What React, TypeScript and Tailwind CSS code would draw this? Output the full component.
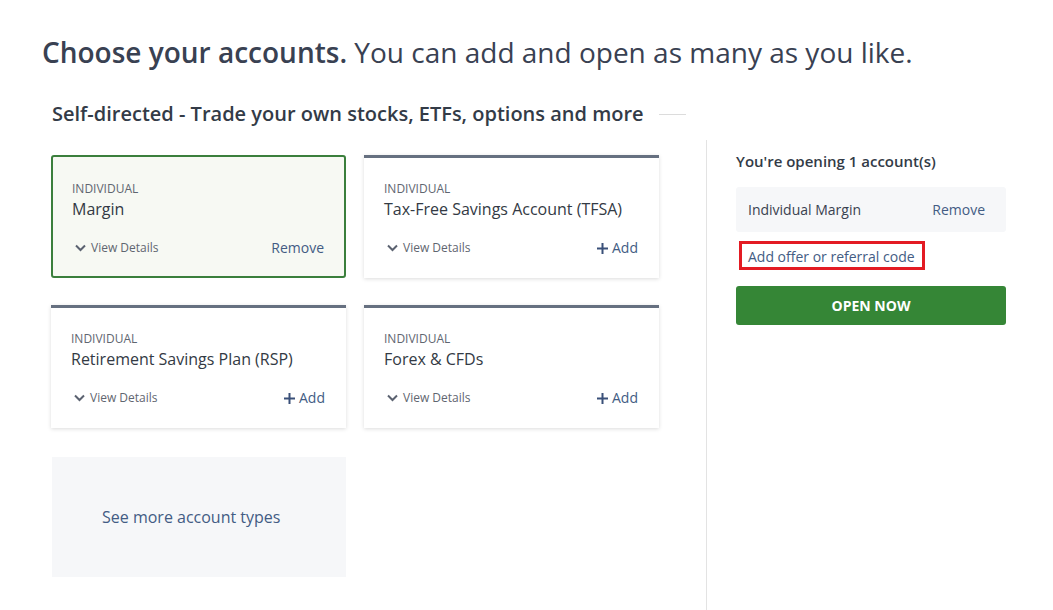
import React from "react";

function Chevron() {
  return (
    <svg width="11" height="8" viewBox="0 0 11 8" className="mr-[5px]">
      <path d="M1 1.5 L5.5 6 L10 1.5" fill="none" stroke="#5b6270" strokeWidth="2" />
    </svg>
  );
}

function Plus() {
  return (
    <svg width="11" height="11" viewBox="0 0 11 11" className="mr-[4px]">
      <path d="M5.5 0 V11 M0 5.5 H11" fill="none" stroke="#3a5079" strokeWidth="2" />
    </svg>
  );
}

function Card({ title, selected }: { title: string; selected?: boolean }) {
  return (
    <div
      className={
        selected
          ? "h-[123px] rounded-[3px] border-2 border-[#3b7f3c] bg-[#f7f9f3] pl-[19px] pr-[20px] pt-[24px]"
          : "h-[123px] border-t-[3px] border-[#667080] bg-white shadow-[0_1px_4px_rgba(0,0,0,0.14)] pl-[20px] pr-[21px] pt-[23px]"
      }
    >
      <div className="text-[12px] leading-[16px] text-[#5f6670] uppercase">Individual</div>
      <div className="mt-px text-[16px] leading-[22px] text-[#333a44]">{title}</div>
      <div className="mt-[18px] flex items-center justify-between">
        <div className="flex items-center text-[12px] leading-[20px] text-[#5f6670] pl-[3px]">
          <Chevron />
          View Details
        </div>
        {selected ? (
          <div className="text-[14px] leading-[20px] text-[#435c84]">Remove</div>
        ) : (
          <div className="flex items-center text-[14px] leading-[20px] text-[#435c84]">
            <Plus />
            Add
          </div>
        )}
      </div>
    </div>
  );
}

export default function App() {
  return (
    <div className="min-h-[610px] bg-white pl-[42px] pt-[33px] font-['Open_Sans',sans-serif]">
      <h1 className="text-[28px] leading-[38px] text-[#394152]">
        <span className="font-[650]">Choose your accounts.</span> You can add and open as many as you like.
      </h1>
      <div className="mt-[30px] flex items-center pl-[10px]">
        <h2 className="text-[20px] leading-[26px] font-semibold text-[#333b47]">
          Self-directed - Trade your own stocks, ETFs, options and more
        </h2>
        <div className="ml-[15px] h-px w-[27px] bg-[#dcdcdc]" />
      </div>
      <div className="mt-[13px] flex">
        <div className="pl-[9px] pt-[15px] pb-[33px] w-[664px]">
          <div className="grid grid-cols-[295px_295px] gap-x-[18px] gap-y-[27px]">
            <Card title="Margin" selected />
            <Card title="Tax-Free Savings Account (TFSA)" />
            <Card title="Retirement Savings Plan (RSP)" />
            <Card title="Forex & CFDs" />
            <div className="ml-px mt-[2px] flex h-[120px] items-center bg-[#f6f7f9] pl-[50px] text-[16px] text-[#435c84]">
              See more account types
            </div>
          </div>
        </div>
        <div className="border-l border-[#e3e3e3] pl-[29px] pt-[11px]">
          <div className="w-[270px]">
            <div className="text-[15px] leading-[20px] font-semibold text-[#333b47]">You're opening 1 account(s)</div>
            <div className="mt-[16px] flex h-[45px] items-center justify-between rounded-[3px] bg-[#f6f7f9] pl-[12px] pr-[21px] text-[14px]">
              <span className="text-[#3a4250]">Individual Margin</span>
              <span className="text-[#435c84]">Remove</span>
            </div>
            <div className="mt-[9px] ml-[3px] inline-block border-[3px] border-[#e31b23] pl-[6px] pr-[7px] pt-[3px] text-[14px] leading-[20px] text-[#435c84]">
              Add offer or referral code
            </div>
            <button className="mt-[16px] flex h-[39px] w-full items-center justify-center rounded-[3px] bg-[#358636] text-[14px] font-bold text-white">
              OPEN NOW
            </button>
          </div>
        </div>
      </div>
    </div>
  );
}
